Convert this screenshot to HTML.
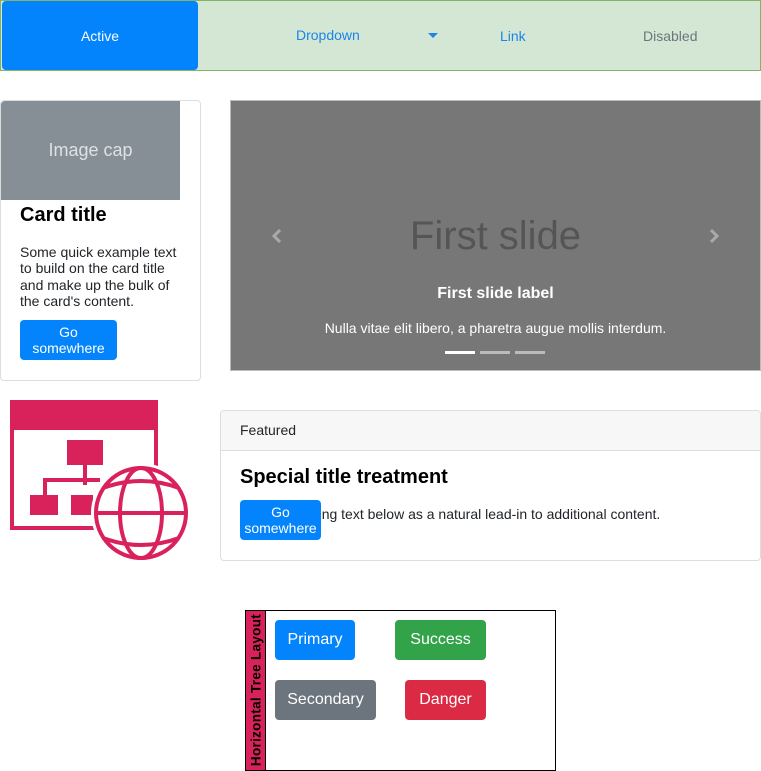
<!DOCTYPE html>
<html><head><meta charset="utf-8"><style>
*{box-sizing:border-box;margin:0;padding:0}
body{width:761px;height:771px;position:relative;background:#fff;font-family:"Liberation Sans",Arial,sans-serif;overflow:hidden}
.a{position:absolute}
.btn{position:absolute;color:#fff;border-radius:4px;display:flex;align-items:center;justify-content:center;text-align:center}
</style></head><body>
<div class="a" style="left:0;top:0;width:761px;height:71px;background:#d4e7d4;border:1px solid #82b366"></div>
<div class="btn" style="left:2px;top:1px;width:196px;height:69px;background:#0384fc;font-size:14px">Active</div>
<div class="a" style="left:296px;top:27px;font-size:14px;color:#1a86e8">Dropdown</div>
<div class="a" style="left:428px;top:33px;width:0;height:0;border-left:5px solid transparent;border-right:5px solid transparent;border-top:5px solid #1a86e8"></div>
<div class="a" style="left:500px;top:28px;font-size:14px;color:#1a86e8">Link</div>
<div class="a" style="left:643px;top:28px;font-size:14px;color:#6c757d">Disabled</div>

<div class="a" style="left:0;top:100px;width:201px;height:281px;border:1px solid #ddd;border-radius:4px"></div>
<div class="a" style="left:1px;top:101px;width:179px;height:99px;background:#868e96;border-top-left-radius:4px;color:#dee2e6;font-size:18px;display:flex;align-items:center;justify-content:center">Image cap</div>
<div class="a" style="left:20px;top:204px;font-size:20px;font-weight:bold">Card title</div>
<div class="a" style="left:20px;top:244px;width:165px;font-size:14px;line-height:16.3px;color:#212529">Some quick example text to build on the card title and make up the bulk of the card's content.</div>
<div class="btn" style="left:20px;top:320px;width:97px;height:40px;background:#0384fc;font-size:14px;line-height:16px">Go<br>somewhere</div>

<div class="a" style="left:230px;top:100px;width:531px;height:271px;background:#777;border:1px solid #bbb"></div>
<div class="a" style="left:230px;top:214px;width:531px;text-align:center;font-size:40px;color:#555">First slide</div>
<svg class="a" style="left:270px;top:228px" width="14" height="16"><path d="M10 2L4 8L10 14" stroke="#aaa" stroke-width="3" fill="none"/></svg>
<svg class="a" style="left:707px;top:228px" width="14" height="16"><path d="M4 2L10 8L4 14" stroke="#aaa" stroke-width="3" fill="none"/></svg>
<div class="a" style="left:230px;top:285px;width:531px;text-align:center;font-size:16px;font-weight:bold;color:#fff">First slide label</div>
<div class="a" style="left:230px;top:320px;width:531px;text-align:center;font-size:14px;color:#fff">Nulla vitae elit libero, a pharetra augue mollis interdum.</div>
<div class="a" style="left:445px;top:351px;width:30px;height:3px;background:#fff"></div>
<div class="a" style="left:480px;top:351px;width:30px;height:3px;background:#bbb"></div>
<div class="a" style="left:515px;top:351px;width:30px;height:3px;background:#bbb"></div>

<svg class="a" style="left:0;top:390px" width="200" height="180" viewBox="0 390 200 180">
<g fill="#d9215c" stroke="#d9215c">
<rect x="10" y="400" width="148" height="30" stroke="none"/>
<rect x="12" y="428" width="144" height="100" fill="none" stroke-width="4"/>
<rect x="67" y="440" width="36" height="25" stroke="none"/>
<path d="M85 465V485M45 495V480H100" fill="none" stroke-width="4"/>
<rect x="30" y="495" width="28" height="20" stroke="none"/>
<rect x="71" y="495" width="22" height="20" stroke="none"/>
<circle cx="141" cy="513" r="50" fill="#fff" stroke="none"/>
<circle cx="141" cy="513" r="45" fill="none" stroke-width="4"/>
<ellipse cx="141" cy="513" rx="21" ry="45" fill="none" stroke-width="4"/>
<path d="M96 513H186M103 488Q141 474 179 488M103 538Q141 552 179 538" fill="none" stroke-width="4"/>
</g></svg>

<div class="a" style="left:220px;top:410px;width:541px;height:151px;border:1px solid #ddd;border-radius:4px;overflow:hidden">
<div style="height:40px;background:#f7f7f7;border-bottom:1px solid #ddd;padding:11px 19px;font-size:14px;color:#212529">Featured</div>
</div>
<div class="a" style="left:240px;top:466px;font-size:20px;font-weight:bold">Special title treatment</div>
<div class="a" style="left:240px;top:506px;font-size:14px;color:#212529">With supporting text below as a natural lead-in to additional content.</div>
<div class="btn" style="left:240px;top:500px;width:81px;height:40px;background:#0384fc;font-size:14px;line-height:16px">Go<br>somewhere</div>

<div class="a" style="left:245px;top:610px;width:311px;height:161px;border:1px solid #000"></div>
<div class="a" style="left:245px;top:610px;width:21px;height:161px;background:#d9215c;border:1px solid #000"></div>
<div class="a" style="left:256px;top:690px;transform:translate(-50%,-50%) rotate(-90deg);white-space:nowrap;font-size:13.5px;font-weight:bold;letter-spacing:0.3px">Horizontal Tree Layout</div>
<div class="btn" style="left:275px;top:620px;width:80px;height:40px;background:#0384fc;font-size:16px">Primary</div>
<div class="btn" style="left:395px;top:620px;width:91px;height:40px;background:#33a34a;font-size:16px">Success</div>
<div class="btn" style="left:275px;top:680px;width:101px;height:40px;background:#6c757d;font-size:16px">Secondary</div>
<div class="btn" style="left:405px;top:680px;width:81px;height:40px;background:#db2a44;font-size:16px">Danger</div>
</body></html>
